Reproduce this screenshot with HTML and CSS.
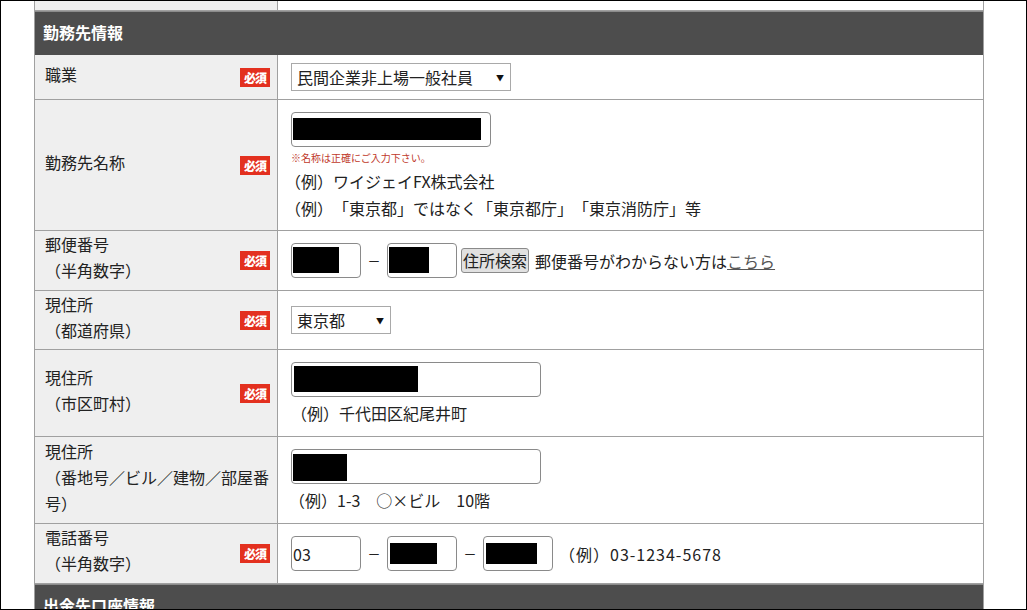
FILE: index.html
```html
<!DOCTYPE html>
<html lang="ja">
<head>
<meta charset="utf-8">
<title>勤務先情報</title>
<link rel="stylesheet" href="styles.css">
</head>
<body>
<div class="frame">
  <div class="form">
    <div class="row partial"><div class="label"></div><div class="value"></div></div>

    <div class="section">勤務先情報</div>

    <div class="row h44">
      <div class="label"><div class="ltext">職業</div><span class="req">必須</span></div>
      <div class="value">
        <span class="sel"><select class="w220"><option>民間企業非上場一般社員</option></select></span>
      </div>
    </div>

    <div class="row h130">
      <div class="label"><div class="ltext">勤務先名称</div><span class="req">必須</span></div>
      <div class="value top">
        <input class="inp w200 rd-name" type="text">
        <div class="note">※名称は正確にご入力下さい。</div>
        <div class="ex shift">（例）ワイジェイFX株式会社</div>
        <div class="ex shift">（例）「東京都」ではなく「東京都庁」「東京消防庁」等</div>
      </div>
    </div>

    <div class="row h59">
      <div class="label"><div class="ltext">郵便番号<br>（半角数字）</div><span class="req">必須</span></div>
      <div class="value">
        <div class="inline">
          <input class="inp w70 rd-zip1" type="text">
          <span class="dash">－</span>
          <input class="inp w70 rd-zip2" type="text">
          <button class="btn" type="button">住所検索</button>
          <span>郵便番号がわからない方は<a class="link" href="#">こちら</a></span>
        </div>
      </div>
    </div>

    <div class="row h58">
      <div class="label"><div class="ltext">現住所<br>（都道府県）</div><span class="req">必須</span></div>
      <div class="value">
        <span class="sel"><select class="w100"><option>東京都</option></select></span>
      </div>
    </div>

    <div class="row h86">
      <div class="label"><div class="ltext">現住所<br>（市区町村）</div><span class="req">必須</span></div>
      <div class="value top">
        <input class="inp w250 rd-city" type="text">
        <div class="ex gap3">（例）千代田区紀尾井町</div>
      </div>
    </div>

    <div class="row h86">
      <div class="label"><div class="ltext">現住所<br>（番地号／ビル／建物／部屋番号）</div></div>
      <div class="value top">
        <input class="inp w250 rd-addr" type="text">
        <div class="ex gap3 shift2">（例）1-3　○×ビル　10階</div>
      </div>
    </div>

    <div class="row h59">
      <div class="label"><div class="ltext">電話番号<br>（半角数字）</div><span class="req">必須</span></div>
      <div class="value">
        <div class="inline">
          <input class="inp w70" type="text" value="03">
          <span class="dash">－</span>
          <input class="inp w70 rd-tel2" type="text">
          <span class="dash">－</span>
          <input class="inp w70 rd-tel3" type="text">
          <span class="telex">（例）03-1234-5678</span>
        </div>
      </div>
    </div>

    <div class="section">出金先口座情報</div>
  </div>
</div>
</body>
</html>
```

FILE: styles.css
```css
html, body {
  margin: 0;
  padding: 0;
  background: #fff;
}
body {
  font-family: "Noto Sans CJK JP", "Noto Sans", sans-serif;
  font-size: 16px;
  color: #222;
  text-spacing-trim: space-all;
}
.frame {
  width: 1027px;
  height: 610px;
  box-sizing: border-box;
  border: 1px solid #000;
  overflow: hidden;
  background: #fff;
}
.form {
  margin-left: 33px;
  width: 950px;
  box-sizing: border-box;
  border-left: 1px solid #a0a0a0;
  border-right: 1px solid #a0a0a0;
}
.row {
  display: flex;
  border-bottom: 1px solid #a0a0a0;
}
.partial { height: 9px; }
.h44 { height: 44px; }
.h58 { height: 58px; }
.h59 { height: 59px; }
.h86 { height: 86px; }
.h130 { height: 130px; }

.label {
  width: 243px;
  flex-shrink: 0;
  box-sizing: border-box;
  border-right: 1px solid #a0a0a0;
  background: #efefef;
  display: flex;
  align-items: center;
  justify-content: space-between;
  padding: 0 7px 0 10px;
}
.ltext {
  line-height: 26px;
  padding-bottom: 7px;
}
.req {
  width: 30px;
  height: 19px;
  flex-shrink: 0;
  background: #e3301f;
  color: #fff;
  font-size: 12px;
  font-weight: 900;
  line-height: 19px;
  text-align: center;
  letter-spacing: -1px;
}
.value {
  flex: 1;
  display: flex;
  flex-direction: column;
  justify-content: center;
  align-items: flex-start;
  padding-left: 13px;
}
.value.top {
  justify-content: flex-start;
  padding-top: 12px;
}
.section {
  background: #4d4d4d;
  color: #fff;
  font-weight: bold;
  font-size: 16px;
  height: 43px;
  line-height: 40px;
  padding-left: 8px;
  border-top: 1px solid #8c8c8c;
}

.inp {
  box-sizing: border-box;
  height: 35px;
  margin: 0;
  padding: 0 1px;
  border: 1px solid #8a8a8a;
  border-radius: 4px;
  font-family: inherit;
  font-size: 16px;
  color: #222;
  background-color: #fff;
  outline: none;
}
.w70 { width: 70px; }
.w200 { width: 200px; }
.w250 { width: 250px; }

.rd-name { background: linear-gradient(#000, #000) no-repeat 1px 5px / 188px 22px #fff; }
.rd-zip1 { background: linear-gradient(#000, #000) no-repeat 1px 3px / 46px 26px #fff; }
.rd-zip2 { background: linear-gradient(#000, #000) no-repeat 1px 3px / 40px 26px #fff; }
.rd-city { background: linear-gradient(#000, #000) no-repeat 2px 3px / 124px 26px #fff; }
.rd-addr { background: linear-gradient(#000, #000) no-repeat 1px 4px / 54px 27px #fff; }
.rd-tel2 { background: linear-gradient(#000, #000) no-repeat 2px 6px / 47px 21px #fff; }
.rd-tel3 { background: linear-gradient(#000, #000) no-repeat 2px 6px / 51px 21px #fff; }

.sel {
  position: relative;
  display: inline-block;
}
.sel select {
  -webkit-appearance: none;
  appearance: none;
  box-sizing: border-box;
  height: 28px;
  margin: 0;
  padding: 0 0 0 5px;
  border: 1px solid #a9a9a9;
  border-radius: 0;
  background: #fff;
  font-family: inherit;
  font-size: 16px;
  color: #222;
  outline: none;
}
.sel::after {
  content: "▼";
  position: absolute;
  right: 7px;
  top: 50%;
  transform: translateY(-50%);
  font-size: 8px;
  color: #111;
  pointer-events: none;
}
.w220 { width: 220px; }
.w100 { width: 100px; }

.note {
  font-size: 10px;
  line-height: 21px;
  color: #c0392b;
}
.ex {
  line-height: 27px;
}
.shift { margin-left: -6px; }
.shift2 { margin-left: -2px; }
.gap3 { margin-top: 3px; }

.inline {
  display: flex;
  align-items: center;
  white-space: nowrap;
}
.dash {
  width: 26px;
  text-align: center;
  font-size: 13px;
}
.btn {
  box-sizing: border-box;
  height: 25px;
  margin: 0 6px 0 4px;
  padding: 0 1px;
  border: 1px solid #8a8a8a;
  border-radius: 3px;
  background: #e1e1e1;
  font-family: inherit;
  font-size: 16px;
  line-height: 21px;
  color: #222;
}
.link {
  color: #555;
  text-decoration: underline;
}
.telex {
  margin-left: 6px;
  letter-spacing: 1px;
}
```
